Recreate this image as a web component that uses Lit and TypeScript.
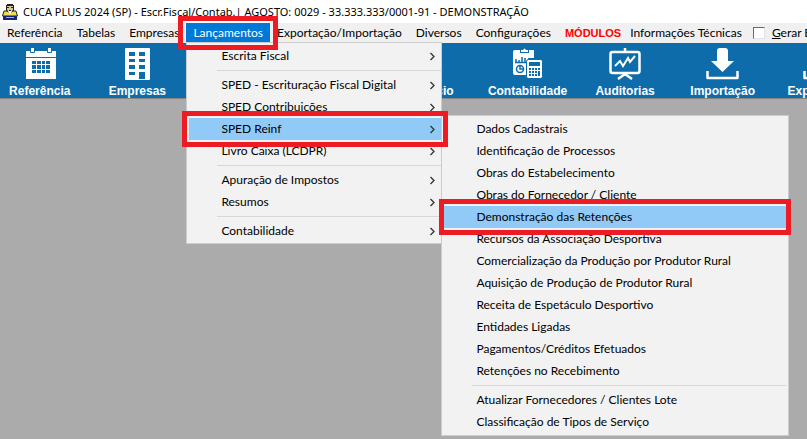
import { LitElement, html, css, svg, nothing, TemplateResult } from "lit";
import { customElement } from "lit/decorators.js";
import { classMap } from "lit/directives/class-map.js";

interface Entry {
  label: string;
  opens?: boolean;
  current?: boolean;
  children?: (Entry | null)[];
}

interface Tool {
  label: string;
  icon: TemplateResult;
}

const REINF: (Entry | null)[] = [
  { label: "Dados Cadastrais" },
  { label: "Identificação de Processos" },
  { label: "Obras do Estabelecimento" },
  { label: "Obras do Fornecedor / Cliente" },
  { label: "Demonstração das Retenções", current: true },
  { label: "Recursos da Associação Desportiva" },
  { label: "Comercialização da Produção por Produtor Rural" },
  { label: "Aquisição de Produção de Produtor Rural" },
  { label: "Receita de Espetáculo Desportivo" },
  { label: "Entidades Ligadas" },
  { label: "Pagamentos/Créditos Efetuados" },
  { label: "Retenções no Recebimento" },
  null,
  { label: "Atualizar Fornecedores / Clientes Lote" },
  { label: "Classificação de Tipos de Serviço" },
];

const LANCAMENTOS: (Entry | null)[] = [
  { label: "Escrita Fiscal", opens: true },
  null,
  { label: "SPED - Escrituração Fiscal Digital", opens: true },
  { label: "SPED Contribuições", opens: true },
  { label: "SPED Reinf", opens: true, current: true, children: REINF },
  { label: "Livro Caixa (LCDPR)", opens: true },
  null,
  { label: "Apuração de Impostos", opens: true },
  { label: "Resumos", opens: true },
  null,
  { label: "Contabilidade", opens: true },
];

const download = svg`
  <path d="M11 3q0-3 3-3h5q3 0 3 3v10h6L16.500 24 5 13h6z" fill="#fff"/>
  <path d="M1.500 23v7h30V23" fill="none" stroke="#fff" stroke-width="2.500" stroke-linejoin="round"/>`;

const TOOLS: (Tool | null)[] = [
  {
    label: "Referência",
    icon: svg`
      <path d="M3 3h30v28H3z" fill="#fff"/>
      <path d="M3 9.500h30" stroke="#0f6cab"/>
      <path d="M7.500 -.5h4v5h-4zM24.500 -.5h4v5h-4z" fill="#fff" stroke="#0f6cab"/>
      <path d="M9 13h4v3H9zM14 13h4v3h-4zM19 13h3v3h-3zM23 13h4v3h-4zM9 17h4v4H9zM14 17h4v4h-4zM19 17h3v4h-3zM23 17h4v4h-4zM9 22h4v3H9zM14 22h4v3h-4zM19 22h3v3h-3zM23 22h4v3h-4z" fill="#0f6cab"/>`,
  },
  {
    label: "Empresas",
    icon: svg`
      <rect x="5" y="0" width="25" height="32" rx="1" fill="#fff"/>
      <path d="M9 4h6v4H9zM19 4h6v4h-6zM9 11h6v3H9zM19 11h6v3h-6zM9 17h6v4H9zM19 17h6v4h-6zM9 24h6v3H9zM19 24h6v7h-6z" fill="#0f6cab"/>`,
  },
  null,
  null,
  { label: "Negócio", icon: svg`` },
  {
    label: "Contabilidade",
    icon: svg`
      <path d="M4 2h5v3h9V2h5v8h-6v17H4q-2 0-2-2V4q0-2 2-2z" fill="#fff"/>
      <path d="M10 2h2q1.500-3 3 0h2v2h-7z" fill="#fff"/>
      <path d="M5 14v-3M8 14v-2M11 14V9M14 14v-4M4 14.500h12" stroke="#0f6cab" stroke-width="1.500"/>
      <circle cx="9" cy="21" r="3.500" fill="none" stroke="#0f6cab" stroke-width="1.500"/>
      <path d="M9 17v4h4" fill="none" stroke="#0f6cab" stroke-width="1.500"/>
      <rect x="15.500" y="11.500" width="16" height="19" rx="2" fill="#fff" stroke="#0f6cab"/>
      <path d="M18 14h11v4H18zM18 20h2v2h-2zM21 20h2v2h-2zM24 20h2v2h-2zM27 20h2v2h-2zM18 23h2v2h-2zM21 23h2v2h-2zM24 23h2v2h-2zM27 23h2v5h-2zM18 26h2v2h-2zM21 26h2v2h-2zM24 26h2v2h-2z" fill="#0f6cab"/>`,
  },
  {
    label: "Auditorias",
    icon: svg`
      <path d="M17 0v4M17 24v4M10 31l7-5 7 5" fill="none" stroke="#fff" stroke-width="2.500"/>
      <rect x="2.500" y="4" width="29" height="21" rx="2" fill="none" stroke="#fff" stroke-width="2.500"/>
      <path d="M7 18l5-5 3 5 5-8 2 4 5-6" fill="none" stroke="#fff" stroke-width="2"/>`,
  },
  { label: "Importação", icon: download },
  { label: "Exportação", icon: download },
];

@customElement("app-root")
export class AppRoot extends LitElement {
  static styles = css`
    :host {
      display: block;
      position: relative;
      min-height: 100vh;
      overflow: hidden;
      background: #ababab;
      color: #000;
      font: 12px/20px Lato, sans-serif;
    }
    * {
      box-sizing: border-box;
    }
    button {
      font: inherit;
      color: inherit;
      background: none;
      border: 0;
      margin: 0;
      padding: 0;
      white-space: nowrap;
      text-align: left;
    }
    ul {
      list-style: none;
      margin: 0;
      padding: 0;
    }
    svg {
      display: block;
      flex: none;
    }
    .title {
      display: flex;
      align-items: center;
      gap: 5px;
      height: 23px;
      padding-left: 2px;
      background: #fff;
      white-space: nowrap;
    }
    .title h1 {
      margin: 0;
      font: 11px/20px "Noto Sans", sans-serif;
    }
    .menubar {
      display: flex;
      height: 20px;
      background: #f0f0f0;
    }
    .menubar > li {
      position: relative;
      flex: none;
    }
    .top {
      height: 20px;
      padding: 0 7px;
    }
    .top.open {
      background: #0078d7;
      color: #fff;
    }
    .top.modules {
      padding-right: 2px;
      color: #f00;
      font: bold 11px/20px "Liberation Sans", sans-serif;
    }
    .check {
      display: flex;
      align-items: center;
      gap: 7px;
      padding-left: 4px;
      white-space: nowrap;
    }
    .check input {
      appearance: none;
      width: 12px;
      height: 12px;
      margin: 0;
      background: #fff;
      border: 1px solid #696969;
      border-color: #696969 #e3e3e3 #e3e3e3 #696969;
    }
    .tools {
      overflow: hidden;
      background: #0f6cab;
      border-bottom: 1px solid #8a8583;
    }
    .strip {
      display: grid;
      grid-template-columns: repeat(9, 1fr);
      margin: 0 -62px 0 -9px;
    }
    .tool {
      display: flex;
      flex-direction: column;
      align-items: center;
      gap: 4px;
      height: 55px;
      padding-top: 5px;
      color: #fff;
      font: bold 12px/14px "Liberation Sans", sans-serif;
    }
    .menu {
      position: absolute;
      background: #f2f2f2;
      border: 1px solid #ccc;
    }
    .main {
      top: 19px;
      left: 0;
      width: 256px;
      padding: 2px 0 1px 2px;
    }
    .sub {
      top: -3px;
      left: 100%;
      width: 348px;
      padding: 2px;
    }
    .menu li {
      position: relative;
    }
    .item {
      display: flex;
      align-items: center;
      justify-content: space-between;
      width: 100%;
      height: 22px;
      padding: 0 5px 0 32px;
    }
    .item.current {
      background: #91c9f7;
    }
    .rule {
      height: 7px;
      padding: 3px 0 0 28px;
    }
    .rule hr {
      margin: 0;
      border: 0;
      border-top: 1px solid #d7d7d7;
    }
    .mark {
      position: absolute;
      z-index: 5;
      inset: -7px;
      border: 5px solid #ed1c24;
      pointer-events: none;
    }
    .sub .mark {
      inset: -7px -5px;
    }
    .menubar > li > .mark {
      inset: -7px -8px;
    }
  `;

  private entry(e: Entry | null): TemplateResult {
    if (!e) return html`<li class="rule" role="separator"><hr /></li>`;
    return html`<li>
      <button class=${classMap({ item: true, current: !!e.current })}>
        <span>${e.label}</span>
        ${e.opens
          ? html`<svg width="7" height="9" viewBox="0 0 7 9" aria-hidden="true">
              <path d="M1.500 1l3.500 3.500L1.500 8" fill="none" stroke="#333" stroke-width="1.300" />
            </svg>`
          : nothing}
      </button>
      ${e.current ? html`<span class="mark"></span>` : nothing}
      ${e.children
        ? html`<ul class="menu sub">${e.children.map((c) => this.entry(c))}</ul>`
        : nothing}
    </li>`;
  }

  private top(label: string, extra = "") {
    return html`<li><button class="top ${extra}">${label}</button></li>`;
  }

  render() {
    return html`
      <header class="title">
        <svg width="16" height="16" viewBox="0 0 16 16" aria-hidden="true">
          <path d="M5 0h6v1h1v6h-1v1H5V7H4V1h1z" fill="#222" />
          <path d="M5 2h6v4l-2 2H7L5 6z" fill="#d8c8a0" />
          <path d="M5 3h2v1H5zM9 3h2v1H9zM7 6h2v1H7z" fill="#222" />
          <path d="M2 7h3l3 2 3-2h3l1.500 5H.5z" fill="#f2dc4a" stroke="#222" />
          <path d="M6 7h4l-2 4z" fill="#fff" />
          <path d="M1 12h14v4H1z" fill="#14247c" />
          <path d="M4 13h8v1H4z" fill="#c9b64c" />
        </svg>
        <h1>CUCA PLUS 2024 (SP) - Escr.Fiscal/Contab.| AGOSTO: 0029 - 33.333.333/0001-91 - DEMONSTRAÇÃO</h1>
      </header>
      <ul class="menubar">
        ${this.top("Referência")} ${this.top("Tabelas")} ${this.top("Empresas")}
        <li>
          <button class="top open">Lançamentos</button>
          <ul class="menu main">${LANCAMENTOS.map((e) => this.entry(e))}</ul>
          <span class="mark"></span>
        </li>
        ${this.top("Exportação/Importação")} ${this.top("Diversos")}
        ${this.top("Configurações")} ${this.top("MÓDULOS", "modules")}
        ${this.top("Informações Técnicas")}
        <li><label class="check"><input type="checkbox" /><span><u>G</u>erar EFD</span></label></li>
      </ul>
      <nav class="tools">
        <div class="strip">
          ${TOOLS.map((t) =>
            t
              ? html`<button class="tool">
                  <svg width="34" height="32" viewBox="0 0 34 32" aria-hidden="true">${t.icon}</svg>
                  <span>${t.label}</span>
                </button>`
              : html`<span></span>`
          )}
        </div>
      </nav>
    `;
  }
}
